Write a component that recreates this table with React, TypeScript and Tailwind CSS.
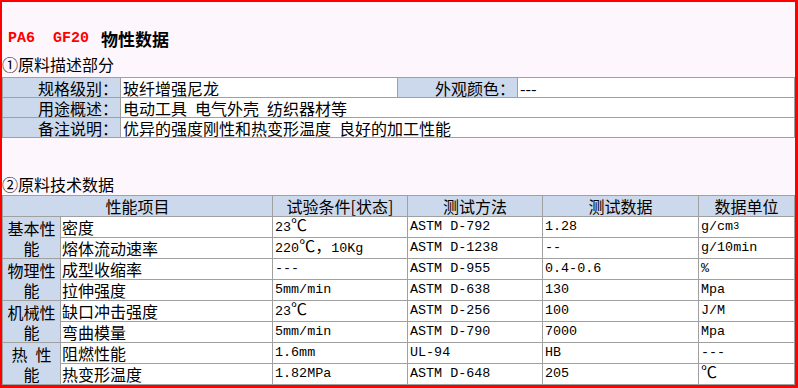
import React from "react"

const cjk = "font-['Noto_Sans_CJK_SC','Liberation_Sans',sans-serif]"
const mono = "font-['Liberation_Mono','Noto_Sans_CJK_SC',monospace]"

const line = "border-r border-b border-[#a0a0a0] p-0 align-top"
const blue = `${line} bg-[#ccd9ec] ${cjk} text-[16px]`
const white = `${line} bg-white`

// ℃ and full-width punctuation look bigger than the ascii in the original
function C({ children }: { children: React.ReactNode }) {
  return <span className={`${cjk} text-[16px] leading-none`}>{children}</span>
}

type Row = {
  group?: React.ReactNode
  name: string
  cond: React.ReactNode
  method: string
  value: string
  unit: React.ReactNode
}

const rows: Row[] = [
  { group: <>基本性<br />能</>, name: "密度", cond: <>23<C>℃</C></>, method: "ASTM D-792", value: "1.28", unit: <>g/cm<sup className="text-[10px] leading-none relative -top-[1px]">3</sup></> },
  { name: "熔体流动速率", cond: <>220<C>℃，</C>10Kg</>, method: "ASTM D-1238", value: "--", unit: "g/10min" },
  { group: <>物理性<br />能</>, name: "成型收缩率", cond: "---", method: "ASTM D-955", value: "0.4-0.6", unit: "%" },
  { name: "拉伸强度", cond: "5mm/min", method: "ASTM D-638", value: "130", unit: "Mpa" },
  { group: <>机械性<br />能</>, name: "缺口冲击强度", cond: <>23<C>℃</C></>, method: "ASTM D-256", value: "100", unit: "J/M" },
  { name: "弯曲模量", cond: "5mm/min", method: "ASTM D-790", value: "7000", unit: "Mpa" },
  { group: <>热{"\u2002"}性<br />能</>, name: "阻燃性能", cond: "1.6mm", method: "UL-94", value: "HB", unit: "---" },
  { name: "热变形温度", cond: "1.82MPa", method: "ASTM D-648", value: "205", unit: <C>℃</C> },
]

export default function App() {
  return (
    <div className="w-[798px] h-[388px] overflow-hidden bg-[#fdf7fd] border-[#ff0000] border-t-2 border-l-2 border-r-[3px] border-b-[3px] text-black">
      <div className="pt-[25px]">
        <div className="h-[24px] flex items-center pl-[6px] font-bold">
          <span className={`${mono} text-[15px] text-[#ff0000] whitespace-pre`}>PA6  GF20</span>
          <span className={`${cjk} text-[17px] ml-[12px]`}>物性数据</span>
        </div>
        <div className={`h-[26px] flex items-center ${cjk} text-[16px]`}>①原料描述部分</div>

        <table className="table-fixed border-separate border-spacing-0 border-t border-l border-[#a0a0a0] w-[792px]">
          <colgroup>
            <col className="w-[118px]" />
            <col className="w-[277px]" />
            <col className="w-[120px]" />
            <col className="w-[277px]" />
          </colgroup>
          <tbody>
            <tr>
              <td className={blue}><div className="h-[19px] flex items-center justify-end pr-[2px]">规格级别：</div></td>
              <td className={white}><div className={`h-[19px] flex items-center pl-[2px] ${cjk} text-[16px]`}>玻纤增强尼龙</div></td>
              <td className={blue}><div className="h-[19px] flex items-center justify-end pr-[2px]">外观颜色：</div></td>
              <td className={white}><div className={`h-[19px] flex items-center pl-[2px] ${cjk} text-[16px]`}>---</div></td>
            </tr>
            <tr>
              <td className={blue}><div className="h-[19px] flex items-center justify-end pr-[2px]">用途概述：</div></td>
              <td colSpan={3} className={white}><div className={`h-[19px] flex items-center pl-[2px] ${cjk} text-[16px] whitespace-pre`}>{"电动工具\u2002电气外壳\u2002纺织器材等"}</div></td>
            </tr>
            <tr>
              <td className={blue}><div className="h-[19px] flex items-center justify-end pr-[2px]">备注说明：</div></td>
              <td colSpan={3} className={white}><div className={`h-[19px] flex items-center pl-[2px] ${cjk} text-[16px] whitespace-pre`}>{"优异的强度刚性和热变形温度\u2002良好的加工性能"}</div></td>
            </tr>
          </tbody>
        </table>

        <div className={`mt-[36px] h-[21px] leading-[21px] ${cjk} text-[16px]`}>②原料技术数据</div>

        <table className="table-fixed border-separate border-spacing-0 border-t border-l border-[#a0a0a0] w-[792px]">
          <colgroup>
            <col className="w-[58px]" />
            <col className="w-[212px]" />
            <col className="w-[135px]" />
            <col className="w-[135px]" />
            <col className="w-[156px]" />
            <col className="w-[96px]" />
          </colgroup>
          <tbody>
            <tr>
              <td colSpan={2} className={blue}><div className="h-[20px] flex items-center justify-center">性能项目</div></td>
              <td className={blue}><div className="h-[20px] flex items-center justify-center">试验条件[状态]</div></td>
              <td className={blue}><div className="h-[20px] flex items-center justify-center">测试方法</div></td>
              <td className={blue}><div className="h-[20px] flex items-center justify-center">测试数据</div></td>
              <td className={blue}><div className="h-[20px] flex items-center justify-center">数据单位</div></td>
            </tr>
            {rows.map((r, i) => (
              <tr key={i}>
                {r.group && (
                  <td rowSpan={2} className={blue}>
                    <div className="h-[41px] flex items-center justify-center text-center leading-[20px]">
                      <div>{r.group}</div>
                    </div>
                  </td>
                )}
                <td className={white}><div className={`h-[20px] flex items-center pl-[1px] ${cjk} text-[16px]`}>{r.name}</div></td>
                {[r.cond, r.method, r.value, r.unit].map((v, j) => (
                  <td key={j} className={white}>
                    <div className={`h-[20px] flex items-center pl-[2px] ${mono} text-[13.4px] whitespace-pre`}>
                      <span>{v}</span>
                    </div>
                  </td>
                ))}
              </tr>
            ))}
          </tbody>
        </table>
      </div>
    </div>
  )
}
